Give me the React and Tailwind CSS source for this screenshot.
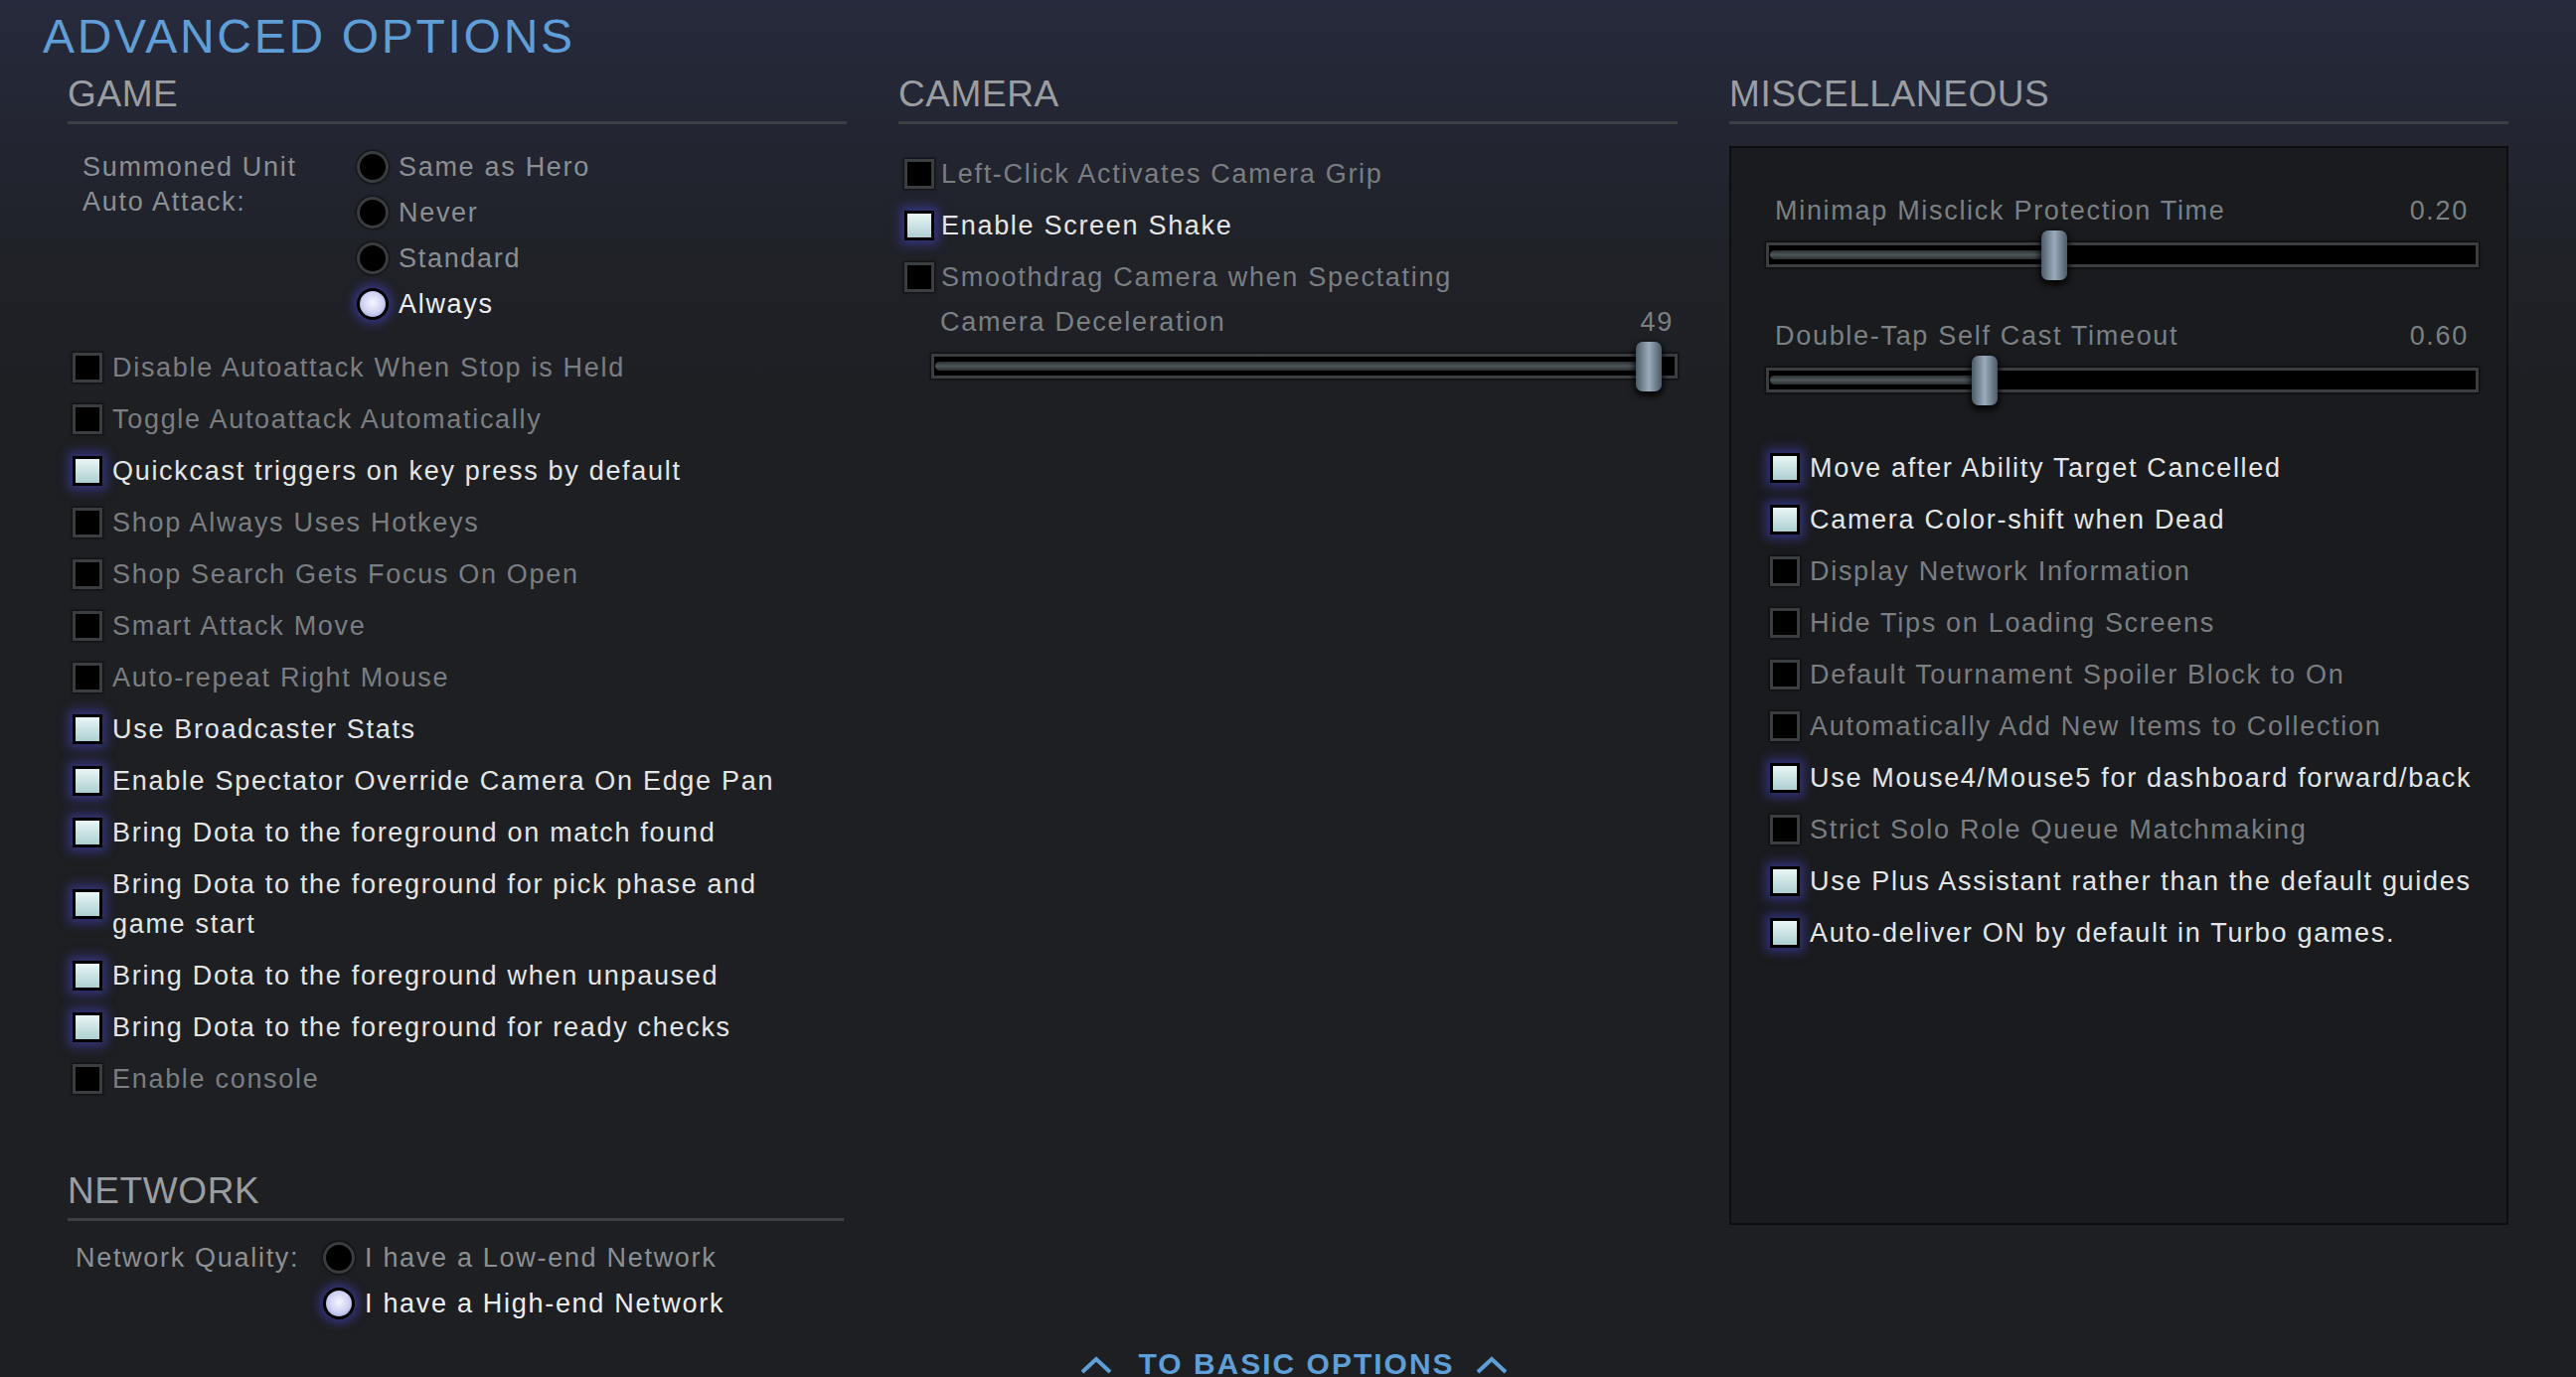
import React from 'react'

const gameOpts = [
  { label: 'Disable Autoattack When Stop is Held', on: false },
  { label: 'Toggle Autoattack Automatically', on: false },
  { label: 'Quickcast triggers on key press by default', on: true },
  { label: 'Shop Always Uses Hotkeys', on: false },
  { label: 'Shop Search Gets Focus On Open', on: false },
  { label: 'Smart Attack Move', on: false },
  { label: 'Auto-repeat Right Mouse', on: false },
  { label: 'Use Broadcaster Stats', on: true },
  { label: 'Enable Spectator Override Camera On Edge Pan', on: true },
  { label: 'Bring Dota to the foreground on match found', on: true },
  { label: 'Bring Dota to the foreground for pick phase and game start', on: true, wrap: true },
  { label: 'Bring Dota to the foreground when unpaused', on: true },
  { label: 'Bring Dota to the foreground for ready checks', on: true },
  { label: 'Enable console', on: false },
]

const cameraOpts = [
  { label: 'Left-Click Activates Camera Grip', on: false },
  { label: 'Enable Screen Shake', on: true },
  { label: 'Smoothdrag Camera when Spectating', on: false },
]

const miscOpts = [
  { label: 'Move after Ability Target Cancelled', on: true },
  { label: 'Camera Color-shift when Dead', on: true },
  { label: 'Display Network Information', on: false },
  { label: 'Hide Tips on Loading Screens', on: false },
  { label: 'Default Tournament Spoiler Block to On', on: false },
  { label: 'Automatically Add New Items to Collection', on: false },
  { label: 'Use Mouse4/Mouse5 for dashboard forward/back', on: true },
  { label: 'Strict Solo Role Queue Matchmaking', on: false },
  { label: 'Use Plus Assistant rather than the default guides', on: true },
  { label: 'Auto-deliver ON by default in Turbo games.', on: true },
]

function Box({ on }) {
  return on ? (
    <div className="w-[30px] h-[30px] shrink-0 border-[3px] border-black bg-[linear-gradient(180deg,#e9f6f6,#aecfd1)] shadow-[0_0_10px_4px_rgba(70,70,200,0.55)]" />
  ) : (
    <div className="w-[30px] h-[30px] shrink-0 border-[3px] border-[#3a3e40] bg-black shadow-[0_0_2px_1px_rgba(0,0,0,0.6)]" />
  )
}

function Radio({ on }) {
  return on ? (
    <div className="w-[32px] h-[32px] shrink-0 rounded-full border-[3px] border-black bg-[radial-gradient(circle_at_50%_45%,#f6f6ff_0%,#cdd0f2_55%,#8a90cc_100%)] shadow-[0_0_10px_4px_rgba(70,70,200,0.55)]" />
  ) : (
    <div className="w-[32px] h-[32px] shrink-0 rounded-full border-[3px] border-[#3a3d3f] bg-black shadow-[0_0_2px_1px_rgba(0,0,0,0.6)]" />
  )
}

function Check({ label, on, wrap, gap = 'ml-[10px]' }) {
  return (
    <div className={wrap ? 'flex items-center py-[6px]' : 'flex items-center h-[52px]'}>
      <Box on={on} />
      <span
        className={`${gap} leading-[40px] ${on ? 'text-[#e4e6e6]' : 'text-[#7a7e81]'} ${wrap ? 'max-w-[680px]' : 'whitespace-nowrap'}`}
      >
        {label}
      </span>
    </div>
  )
}

function RadioRow({ label, on }) {
  return (
    <div className="flex items-center h-[46px]">
      <Radio on={on} />
      <span className={`ml-[10px] whitespace-nowrap ${on ? 'text-[#eceef0]' : 'text-[#8b8f92]'}`}>{label}</span>
    </div>
  )
}

function Header({ children }) {
  return (
    <div>
      <div className="h-[37px] leading-[37px] text-[37px] tracking-[0.6px] text-[#9a9ea1]">{children}</div>
      <div className="mt-[9px] h-[3px] bg-[#3d4043]" />
    </div>
  )
}

function Slider({ label, value, thumb, labelPad, trackPad }) {
  return (
    <div>
      <div className={`flex items-center justify-between h-[38px] text-[#7b8083] ${labelPad}`}>
        <span>{label}</span>
        <span>{value}</span>
      </div>
      <div className={`mt-[13px] ${trackPad}`}>
        <div className="relative flex items-center h-[25px] px-[1px] border-[3px] border-[#3a3e40] bg-black shadow-[0_0_2px_1px_rgba(0,0,0,0.7)]">
          <div
            className="h-[9px] rounded-full bg-[linear-gradient(180deg,#2b3133,#4c5558_50%,#2b3133)]"
            style={{ width: thumb + 4 }}
          />
          <div
            className="absolute top-[-15px] w-[26px] h-[50px] rounded-[7px] bg-[linear-gradient(90deg,#4c5966,#9cacbd_50%,#4c5966)] shadow-[0_3px_6px_2px_rgba(0,0,0,0.8)]"
            style={{ left: thumb - 3 }}
          />
        </div>
      </div>
    </div>
  )
}

function Chevron() {
  return (
    <svg width="34" height="20" viewBox="0 0 34 20" className="shrink-0">
      <polyline points="3,18 17,5 31,18" fill="none" stroke="#5f9ed6" strokeWidth="4" />
    </svg>
  )
}

export default function App() {
  return (
    <div className="min-h-[1386px] w-full overflow-hidden bg-[linear-gradient(180deg,#262a3c_0px,#202229_240px,#1e1f23_420px)] font-['Liberation_Sans',Arial,sans-serif] text-[27px] tracking-[1.7px]">
      <div className="pl-[43px] pt-[13px] h-[61px] leading-[48px] text-[48px] tracking-[2.7px] text-[#5f9ed6]">
        ADVANCED OPTIONS
      </div>

      <div className="mt-[15px] px-[68px] grid grid-cols-[784px_784px_784px] gap-x-[52px] items-start">
        {/* Game */}
        <div>
          <Header>GAME</Header>
          <div className="mt-[20px] flex pl-[15px]">
            <div className="w-[230px] pt-[6px] leading-[35px] text-[#8c9093]">Summoned Unit Auto Attack:</div>
            <div className="ml-[46px]">
              <RadioRow label="Same as Hero" />
              <RadioRow label="Never" />
              <RadioRow label="Standard" />
              <RadioRow label="Always" on />
            </div>
          </div>
          <div className="mt-[15px] pl-[5px]">
            {gameOpts.map((o) => (
              <Check key={o.label} {...o} />
            ))}
          </div>

          <div className="mt-[68px] mr-[3px]">
            <Header>NETWORK</Header>
          </div>
          <div className="mt-[14px] flex pl-[8px]">
            <div className="w-[249px] h-[46px] leading-[46px] text-[#8c9093] whitespace-nowrap">Network Quality:</div>
            <div>
              <RadioRow label="I have a Low-end Network" />
              <RadioRow label="I have a High-end Network" on />
            </div>
          </div>
        </div>

        {/* Camera */}
        <div>
          <Header>CAMERA</Header>
          <div className="mt-[24px] pl-[6px]">
            {cameraOpts.map((o) => (
              <Check key={o.label} {...o} gap="ml-[7px]" />
            ))}
          </div>
          <Slider label="Camera Deceleration" value="49" thumb={709} labelPad="pl-[42px] pr-[4px]" trackPad="ml-[33px]" />
        </div>

        {/* Miscellaneous */}
        <div>
          <Header>MISCELLANEOUS</Header>
          <div className="mt-[22px] h-[1086px] border-2 border-[#0d0e10] bg-[#1a1b1e] pt-[44px]">
            <Slider
              label="Minimap Misclick Protection Time"
              value="0.20"
              thumb={277}
              labelPad="pl-[44px] pr-[38px]"
              trackPad="ml-[35px] mr-[28px]"
            />
            <div className="mt-[50px]">
              <Slider
                label="Double-Tap Self Cast Timeout"
                value="0.60"
                thumb={207}
                labelPad="pl-[44px] pr-[38px]"
                trackPad="ml-[35px] mr-[28px]"
              />
            </div>
            <div className="mt-[50px] pl-[39px]">
              {miscOpts.map((o) => (
                <Check key={o.label} {...o} />
              ))}
            </div>
          </div>
        </div>
      </div>

      <div className="mt-[23px] flex items-center justify-center pl-[12px]">
        <Chevron />
        <span className="ml-[25px] mr-[20px] h-[30px] leading-[30px] text-[30px] font-bold tracking-[2px] text-[#5f9ed6]">
          TO BASIC OPTIONS
        </span>
        <Chevron />
      </div>
    </div>
  )
}
